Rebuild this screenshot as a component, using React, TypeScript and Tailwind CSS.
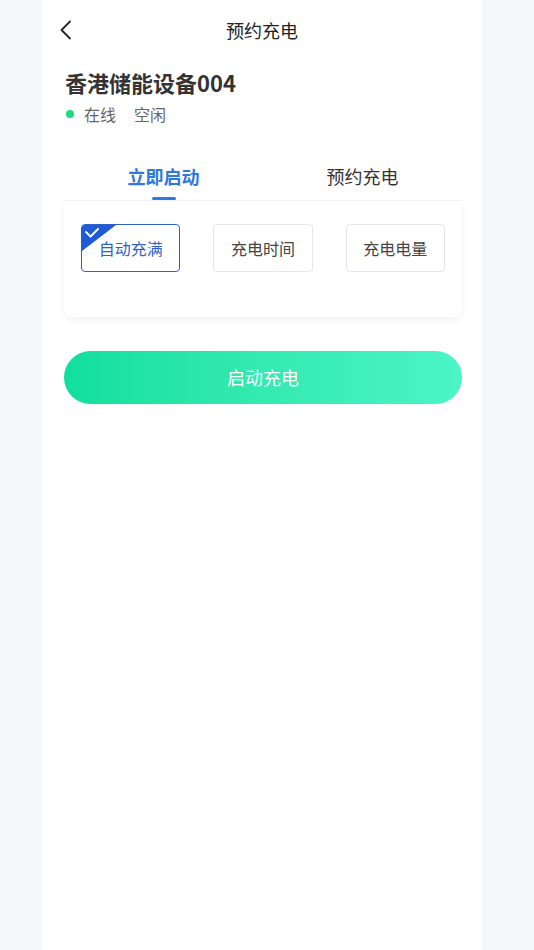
const FONT = { fontFamily: '"Noto Sans CJK SC", "Noto Sans", sans-serif' };

const options = ["自动充满", "充电时间", "充电电量"];

export default function App() {
  const selected = 0;

  return (
    <div className="min-h-[950px] bg-[#f6f7f9] flex" style={FONT}>
      <div className="ml-[42px] w-[440px] min-h-[950px] bg-white">
        {/* header */}
        <div className="h-[60px] relative flex items-center justify-center">
          <button className="absolute left-[17px] top-[20px] text-[#222]">
            <svg width="14" height="20" viewBox="0 0 14 20">
              <path d="M11 1.5 L2.5 10 L11 18.5" fill="none" stroke="#222" strokeWidth="1.8" strokeLinecap="round" strokeLinejoin="round" />
            </svg>
          </button>
          <h1 className="text-[18px] text-[#222] leading-none">预约充电</h1>
        </div>

        <div className="pl-[22px] pr-[20px]">
          <h2 className="text-[22px] font-bold text-[#333] leading-none mt-[11px] pl-[1px]">
            香港储能设备004
          </h2>
          <div className="flex items-center mt-[13px] text-[16px] text-[#666] leading-none">
            <span className="w-[8px] h-[8px] rounded-full bg-[#1bdc7e] ml-[2px] mr-[10px]" />
            <span>在线</span>
            <span className="ml-[18px]">空闲</span>
          </div>

          {/* tabs */}
          <div className="mt-[45px] flex border-b border-[#f3f4f6]">
            <div className="flex-1 flex flex-col items-center">
              <span className="text-[18px] font-bold text-[#2f78e0] leading-none">立即启动</span>
              <span className="mt-[12px] w-[24px] h-[3px] rounded-full bg-[#2f78e0]" />
            </div>
            <div className="flex-1 flex flex-col items-center">
              <span className="text-[18px] text-[#333] leading-none">预约充电</span>
              <span className="mt-[12px] h-[3px]" />
            </div>
          </div>

          {/* card */}
          <div className="rounded-b-[8px] shadow-[0_3px_8px_rgba(0,0,0,0.05)] px-[17px] pt-[23px] pb-[45px] grid grid-cols-3 gap-[33px]">
            {options.map((label, i) =>
              i === selected ? (
                <div
                  key={label}
                  className="relative h-[48px] rounded-[4px] border border-[#2f62c8] flex items-center justify-center text-[16px] text-[#2f62c8] overflow-hidden"
                >
                  <svg className="absolute left-0 top-0" width="34" height="26" viewBox="0 0 34 26">
                    <path d="M0 0 H34 L0 26 Z" fill="#1f5bd6" />
                    <path d="M4 7 L8.5 11.5 L16 4" fill="none" stroke="#fff" strokeWidth="2" strokeLinecap="round" strokeLinejoin="round" />
                  </svg>
                  <span className="relative">{label}</span>
                </div>
              ) : (
                <div
                  key={label}
                  className="h-[48px] rounded-[4px] border border-[#e6e7ea] flex items-center justify-center text-[16px] text-[#444]"
                >
                  {label}
                </div>
              )
            )}
          </div>

          <button className="mt-[34px] w-full h-[53px] rounded-full bg-gradient-to-r from-[#0fdf9b] to-[#4af5c6] text-white text-[18px]">
            启动充电
          </button>
        </div>
      </div>
    </div>
  );
}
